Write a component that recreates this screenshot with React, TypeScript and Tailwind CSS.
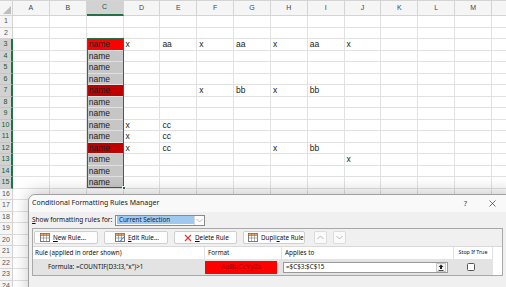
import {FC} from 'react';

const COLS = ['A', 'B', 'C', 'D', 'E', 'F', 'G', 'H', 'I', 'J', 'K', 'L', 'M', 'N'];
const ROWS = Array.from({length: 24}, (_, i) => i + 1);

const values: Record<string, string> = {
  D3: 'x', E3: 'aa', F3: 'x', G3: 'aa', H3: 'x', I3: 'aa', J3: 'x',
  F7: 'x', G7: 'bb', H7: 'x', I7: 'bb',
  D10: 'x', E10: 'cc',
  D11: 'x', E11: 'cc',
  D12: 'x', E12: 'cc', H12: 'x', I12: 'bb',
  J13: 'x',
};

const isSel = (r: number) => r >= 3 && r <= 15;

const cellBg = (col: string, r: number) => {
  if (col !== 'C' || !isSel(r)) return 'bg-white';
  if (r === 3) return 'bg-[#ff0000]';
  if (r === 7 || r === 12) return 'bg-[#c00000]';
  return 'bg-[#c6c6c6]';
};

const TableIcon: FC<{pencil?: boolean}> = ({pencil}) => (
  <svg width="10" height="9" viewBox="0 0 10 9">
    <rect x="0.5" y="0.5" width="9" height="8" fill="#fff" stroke="#7a7a7a" />
    <rect x="0.5" y="0.5" width="9" height="2" fill="#e8a15a" stroke="#b5651d" strokeWidth="0.6" />
    <line x1="3.5" y1="0.5" x2="3.5" y2="8.5" stroke="#7a7a7a" strokeWidth="0.6" />
    <line x1="6.5" y1="0.5" x2="6.5" y2="8.5" stroke="#7a7a7a" strokeWidth="0.6" />
    <line x1="0.5" y1="5" x2="9.5" y2="5" stroke="#7a7a7a" strokeWidth="0.6" />
    {pencil && <path d="M4 8.5 L9.5 3 L10 3.5 L4.5 9 Z" fill="#2b78d4" />}
  </svg>
);

const Chevron: FC<{up?: boolean}> = ({up}) => (
  <svg width="7" height="5" viewBox="0 0 7 5">
    <path d={up ? 'M0.5 4 L3.5 1 L6.5 4' : 'M0.5 1 L3.5 4 L6.5 1'} fill="none" stroke="#a8a8a8" strokeWidth="0.8" />
  </svg>
);

const App: FC = () => {
  return (
    <div className="relative h-[287px] w-[506px] overflow-hidden bg-white" style={{fontFamily: '"Liberation Sans", Arial, sans-serif'}}>
      <div className="h-[1px] bg-[#d4d4d4]" />
      <div className="grid grid-cols-[13px_repeat(14,36.85px)] grid-rows-[15px_repeat(24,11.5px)]">
        <div className="relative border-r border-b border-[#d4d4d4] bg-[#f5f5f5]">
          <svg className="absolute right-[1px] bottom-[1px]" width="8" height="8" viewBox="0 0 8 8">
            <path d="M8 0 L8 8 L0 8 Z" fill="#bdbdbd" />
          </svg>
        </div>
        {COLS.map(c => (
          <div
            key={c}
            className={`flex items-center justify-center border-r text-[7px] ${
              c === 'C'
                ? 'border-b-2 border-r-[#d4d4d4] border-b-[#217346] bg-[#d2d2d2] text-[#0f5a2e]'
                : 'border-b border-[#d4d4d4] bg-[#f5f5f5] text-[#444]'
            }`}>
            {c === 'N' ? '' : c}
          </div>
        ))}
        {ROWS.map(r => (
          <>
            <div
              key={`h${r}`}
              className={`flex items-center justify-center border-b text-[7px] ${
                isSel(r)
                  ? 'border-r-2 border-b-[#c4c4c4] border-r-[#217346] bg-[#d2d2d2] text-[#0f5a2e]'
                  : 'border-r border-[#d4d4d4] bg-[#f5f5f5] text-[#555]'
              }`}>
              {r}
            </div>
            {COLS.map(c => {
              const v = c === 'C' && isSel(r) ? 'name' : values[`${c}${r}`];
              return (
                <div
                  key={`${c}${r}`}
                  className={`flex items-center overflow-hidden whitespace-nowrap border-r border-b border-[#e1e1e1] pl-[2px] text-[8.5px] leading-none text-[#222] ${cellBg(c, r)}`}>
                  {v}
                </div>
              );
            })}
          </>
        ))}
      </div>

      {/* selection C3:C15 */}
      <div className="pointer-events-none absolute left-[86.7px] top-[38px] h-[150px] w-[37.5px] border-[1.5px] border-[#217346]" />
      <div className="absolute left-[122px] top-[186px] h-[4px] w-[4px] border border-white bg-[#217346]" />

      {/* dialog */}
      <div
        className="absolute left-[28px] top-[194px] h-[110px] w-[490px] whitespace-nowrap rounded-tl-[7px] border border-[#a0a0a0] bg-[#f0f0f0] shadow-[0_-2px_16px_rgba(0,0,0,0.22)]"
        style={{fontFamily: '"Noto Sans", "Open Sans", sans-serif'}}>
        <div className="flex h-[17px] items-center rounded-tl-[7px] bg-[#f9f9f9] pl-[3px] text-[7px] text-[#1a1a1a]">
          <span>Conditional Formatting Rules Manager</span>
          <span className="ml-auto text-[7.5px] text-[#333]">?</span>
          <svg className="ml-[22px] mr-[21px]" width="7" height="7" viewBox="0 0 7 7">
            <path d="M0.5 0.5 L6.5 6.5 M6.5 0.5 L0.5 6.5" stroke="#333" strokeWidth="0.7" />
          </svg>
        </div>
        <div className="pl-[3px] pr-[3px]">
          <div className="flex h-[16px] items-center text-[6.5px] text-[#111]">
            <span className="w-[83px]">
              <span className="underline">S</span>how formatting rules for:
            </span>
            <div className="flex h-[11px] w-[90px] items-center border border-[#8a8a8a] bg-white">
              <span className="ml-[1px] flex h-[8px] w-[77px] items-center bg-[#9fc9ee] pl-[2px] text-[6.3px] text-[#10243c]">
                Current Selection
              </span>
              <span className="ml-auto flex h-full w-[10px] items-center justify-center border-l border-[#d8d8d8]">
                <Chevron />
              </span>
            </div>
          </div>
          <div className="w-[471px] border border-[#a8a8a8] bg-white">
            <div className="flex h-[18px] items-center gap-[6px] border-b border-[#d9d9d9] bg-[#f0f0f0] pl-[1px] text-[6.3px] text-[#111]">
              <div className="flex h-[13px] w-[64px] items-center gap-[3px] rounded-[2px] border border-[#cfcfcf] bg-[#fdfdfd] pl-[5px]">
                <TableIcon />
                <span>
                  <span className="underline">N</span>ew Rule...
                </span>
              </div>
              <div className="flex h-[13px] w-[64px] items-center gap-[3px] rounded-[2px] border border-[#cfcfcf] bg-[#fdfdfd] pl-[10px]">
                <TableIcon pencil />
                <span>
                  <span className="underline">E</span>dit Rule...
                </span>
              </div>
              <div className="flex h-[13px] w-[63px] items-center gap-[3px] rounded-[2px] border border-[#cfcfcf] bg-[#fdfdfd] pl-[9px]">
                <svg width="8" height="8" viewBox="0 0 8 8">
                  <path d="M1 1 L7 7 M7 1 L1 7" stroke="#e0322f" strokeWidth="1.1" />
                </svg>
                <span>
                  <span className="underline">D</span>elete Rule
                </span>
              </div>
              <div className="flex h-[13px] w-[62px] items-center gap-[3px] rounded-[2px] border border-[#cfcfcf] bg-[#fdfdfd] pl-[4px]">
                <TableIcon />
                <span>
                  Dupli<span className="underline">c</span>ate Rule
                </span>
              </div>
              <div className="ml-[3px] flex h-[13px] w-[13px] items-center justify-center rounded-[2px] border border-[#dcdcdc] bg-[#fafafa]">
                <Chevron up />
              </div>
              <div className="flex h-[13px] w-[13px] items-center justify-center rounded-[2px] border border-[#dcdcdc] bg-[#fafafa]">
                <Chevron />
              </div>
            </div>
            <div className="flex h-[12px] items-center text-[6.3px] text-[#111]">
              <div className="flex h-full w-[172px] items-center border-r border-[#e2e2e2] pl-[2px]">Rule (applied in order shown)</div>
              <div className="flex h-full w-[77px] items-center border-r border-[#e2e2e2] pl-[3px]">Format</div>
              <div className="flex h-full w-[172px] items-center border-r border-[#e2e2e2] pl-[3px]">Applies to</div>
              <div className="flex h-full w-[39px] items-center justify-center border-r border-[#e2e2e2] text-[5.3px]">Stop If True</div>
            </div>
            <div className="flex h-[16px] w-[460px] items-center bg-[#e3e3e3] text-[6.3px] text-[#111]">
              <div className="w-[172px] pl-[15px]">Formula: =COUNTIF(D3:I3,"x")&gt;1</div>
              <div className="flex h-[13px] w-[72px] items-center justify-center bg-[#ff0000] text-[7px] text-[#9c0006]">AaBbCcYyZz</div>
              <div className="ml-[6px] flex h-[11px] w-[165px] items-center border border-[#9a9a9a] bg-white pl-[2px]">
                <span>=$C$3:$C$15</span>
                <span className="ml-auto mr-[1px] flex h-[9px] w-[10px] items-center justify-center border border-[#c8c8c8] bg-[#f4f4f4]">
                  <svg width="6" height="7" viewBox="0 0 6 7">
                    <path d="M3 0.5 L0.5 3 H2 V5 H4 V3 H5.5 Z" fill="#222" />
                    <rect x="0.5" y="6" width="5" height="0.8" fill="#222" />
                  </svg>
                </span>
              </div>
              <div className="flex w-[45px] justify-center">
                <div className="h-[8px] w-[8px] rounded-[1.5px] border border-[#555] bg-white" />
              </div>
            </div>
          </div>
        </div>
      </div>
    </div>
  );
};

export default App;
